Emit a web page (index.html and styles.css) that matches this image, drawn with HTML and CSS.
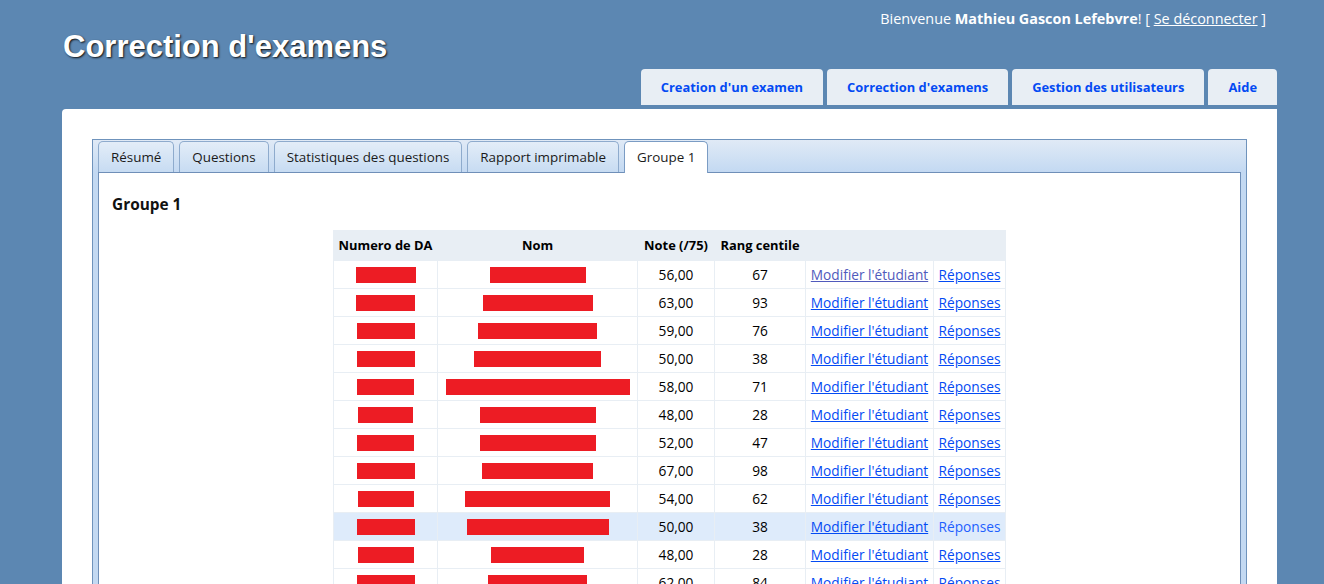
FILE: index.html
```html
<!DOCTYPE html>
<html lang="fr">
<head>
<meta charset="utf-8">
<title>Correction d'examens</title>
<link rel="stylesheet" href="styles.css">
</head>
<body>
<div class="page">
  <div class="header">
    <div class="login">Bienvenue <b>Mathieu Gascon Lefebvre</b>! [ <a href="#">Se déconnecter</a> ]</div>
    <h1 class="title">Correction d'examens</h1>
    <ul class="menu">
      <li><a href="#">Creation d'un examen</a></li>
      <li><a href="#">Correction d'examens</a></li>
      <li><a href="#">Gestion des utilisateurs</a></li>
      <li><a href="#">Aide</a></li>
    </ul>
  </div>
  <div class="main">
    <div class="tabs">
      <ul class="tabnav">
        <li class="tab">Résumé</li>
        <li class="tab">Questions</li>
        <li class="tab">Statistiques des questions</li>
        <li class="tab">Rapport imprimable</li>
        <li class="tab active">Groupe 1</li>
      </ul>
      <div class="panel">
        <h2 class="group">Groupe 1</h2>
        <table class="grid">
          <colgroup>
            <col class="c-da"><col class="c-nom"><col class="c-note"><col class="c-rang"><col class="c-mod"><col class="c-rep">
          </colgroup>
          <thead>
            <tr><th>Numero de DA</th><th>Nom</th><th>Note (/75)</th><th>Rang centile</th><th></th><th></th></tr>
          </thead>
          <tbody>
            <tr><td><span class="bar" style="width:60px"></span></td><td><span class="bar" style="width:96px"></span></td><td>56,00</td><td>67</td><td><a class="visited" href="#">Modifier l'étudiant</a></td><td><a href="#">Réponses</a></td></tr>
            <tr><td><span class="bar" style="width:59px"></span></td><td><span class="bar" style="width:110px"></span></td><td>63,00</td><td>93</td><td><a href="#">Modifier l'étudiant</a></td><td><a href="#">Réponses</a></td></tr>
            <tr><td><span class="bar" style="width:58px"></span></td><td><span class="bar" style="width:119px"></span></td><td>59,00</td><td>76</td><td><a href="#">Modifier l'étudiant</a></td><td><a href="#">Réponses</a></td></tr>
            <tr><td><span class="bar" style="width:58px"></span></td><td><span class="bar" style="width:127px"></span></td><td>50,00</td><td>38</td><td><a href="#">Modifier l'étudiant</a></td><td><a href="#">Réponses</a></td></tr>
            <tr><td><span class="bar" style="width:57px"></span></td><td><span class="bar" style="width:184px"></span></td><td>58,00</td><td>71</td><td><a href="#">Modifier l'étudiant</a></td><td><a href="#">Réponses</a></td></tr>
            <tr><td><span class="bar" style="width:55px"></span></td><td><span class="bar" style="width:116px"></span></td><td>48,00</td><td>28</td><td><a href="#">Modifier l'étudiant</a></td><td><a href="#">Réponses</a></td></tr>
            <tr><td><span class="bar" style="width:57px"></span></td><td><span class="bar" style="width:116px"></span></td><td>52,00</td><td>47</td><td><a href="#">Modifier l'étudiant</a></td><td><a href="#">Réponses</a></td></tr>
            <tr><td><span class="bar" style="width:58px"></span></td><td><span class="bar" style="width:111px"></span></td><td>67,00</td><td>98</td><td><a href="#">Modifier l'étudiant</a></td><td><a href="#">Réponses</a></td></tr>
            <tr><td><span class="bar" style="width:56px"></span></td><td><span class="bar" style="width:145px"></span></td><td>54,00</td><td>62</td><td><a href="#">Modifier l'étudiant</a></td><td><a href="#">Réponses</a></td></tr>
            <tr class="hover"><td><span class="bar" style="width:58px"></span></td><td><span class="bar" style="width:142px"></span></td><td>50,00</td><td>38</td><td><a href="#">Modifier l'étudiant</a></td><td><a class="hovered" href="#">Réponses</a></td></tr>
            <tr><td><span class="bar" style="width:56px"></span></td><td><span class="bar" style="width:93px"></span></td><td>48,00</td><td>28</td><td><a href="#">Modifier l'étudiant</a></td><td><a href="#">Réponses</a></td></tr>
            <tr><td><span class="bar" style="width:58px"></span></td><td><span class="bar" style="width:99px"></span></td><td>62,00</td><td>84</td><td><a href="#">Modifier l'étudiant</a></td><td><a href="#">Réponses</a></td></tr>
          </tbody>
        </table>
      </div>
    </div>
  </div>
</div>
</body>
</html>
```

FILE: styles.css
```css
html, body {
  margin: 0;
  padding: 0;
}
body {
  background: #5c87b2;
  font-family: "Open Sans", "Liberation Sans", sans-serif;
  color: #111;
}
.page {
  width: 1215px;
  margin-left: 62px;
}
.header {
  display: grid;
  grid-template-columns: 1fr auto;
  grid-template-rows: 28px 77px;
  padding-bottom: 4px;
}
.login {
  grid-column: 1 / -1;
  justify-self: end;
  margin: 10px 11px 0 0;
  font-size: 14.4px;
  line-height: 18px;
  color: #fff;
}
.login b {
  font-weight: 700;
}
.login a {
  color: #fff;
  text-decoration: underline;
}
.title {
  grid-column: 1;
  grid-row: 2;
  margin: 0;
  padding: 1px 0 0 1px;
  font-family: "Liberation Sans", Arial, sans-serif;
  font-weight: bold;
  font-size: 31px;
  line-height: 36px;
  color: #fff;
  text-shadow: 1px 1px 2px #111;
}
.menu {
  grid-column: 2;
  grid-row: 2;
  align-self: end;
  display: flex;
  gap: 4px;
  list-style: none;
  margin: 0;
  padding: 0;
}
.menu a {
  display: block;
  padding: 0 20px;
  line-height: 36px;
  font-weight: 700;
  font-size: 12.9px;
  background: #e8eef4;
  color: #034af3;
  text-decoration: none;
  border-radius: 4px 4px 0 0;
}
.main {
  background: #fff;
  padding: 30px 30px 15px 30px;
  border-radius: 4px 0 0 0;
  margin-bottom: 30px;
}
.tabs {
  border: 1px solid #6f93bc;
  background: linear-gradient(#e0eaf6, #c3d9f2 32px) #c5daf2;
  padding: 1px 5px 5px 5px;
}
.tabnav {
  display: flex;
  gap: 5px;
  list-style: none;
  margin: 0 0 -1px 0;
  padding: 0;
}
.tab {
  box-sizing: border-box;
  height: 32px;
  padding: 0 12px;
  border: 1px solid #8eabcd;
  border-bottom: 0;
  border-radius: 5px 5px 0 0;
  background: linear-gradient(#e3edf8, #c6dbf2);
  font-size: 13.4px;
  line-height: 30px;
  color: #1a1a1a;
}
.tab.active {
  position: relative;
  z-index: 2;
  background: #fff;
  border-color: #7b9cc4;
}
.panel {
  position: relative;
  background: #fff;
  border: 1px solid #6f8fb8;
  padding: 22px 13px 20px;
  min-height: 500px;
}
.group {
  margin: 0 0 15px 0;
  font-size: 15.4px;
  line-height: 20px;
  font-weight: 700;
  color: #111;
}
.grid {
  table-layout: fixed;
  width: 672px;
  margin: 0 auto;
  border-collapse: collapse;
  border: 1px solid #e8eef4;
  font-size: 13.7px;
}
.c-da { width: 104px; }
.c-nom { width: 200px; }
.c-note { width: 77px; }
.c-rang { width: 91px; }
.c-mod { width: 128px; }
.c-rep { width: 72px; }
.grid th {
  background: #e8eef4;
  border: 1px solid #e8eef4;
  padding: 6px 0;
  line-height: 17px;
  font-size: 12.9px;
  font-weight: 700;
  text-align: center;
  white-space: nowrap;
  color: #000;
}
.grid td {
  border: 1px solid #e8eef4;
  padding: 5px 0;
  height: 17px;
  line-height: 17px;
  text-align: center;
  vertical-align: middle;
  white-space: nowrap;
  color: #000;
}
.grid tr.hover td {
  background: #deebfb;
}
.grid a {
  color: #034af3;
  text-decoration: underline;
}
.grid a.visited {
  color: #505abc;
}
.grid a.hovered {
  color: #1d60ff;
  text-decoration: none;
}
.bar {
  display: block;
  height: 16px;
  margin: 0 auto;
  background: #ed1c24;
}
```
